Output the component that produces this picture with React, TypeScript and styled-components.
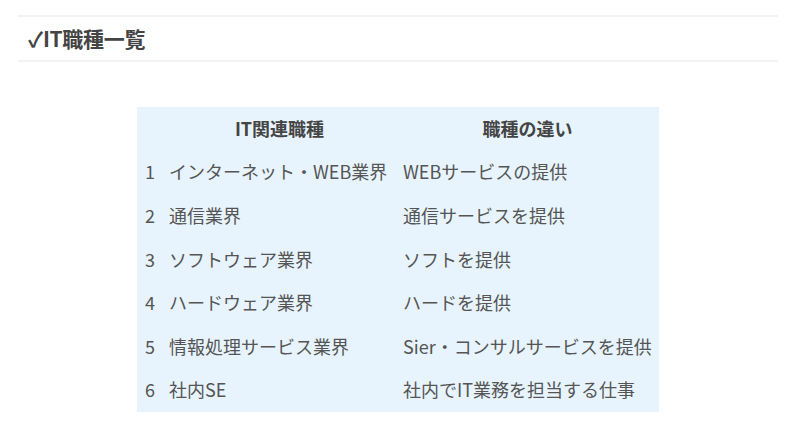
import styled, {createGlobalStyle} from "styled-components"

const GlobalStyle = createGlobalStyle`
  body {
    margin: 0;
    background: #ffffff;
    font-family: "Noto Sans CJK JP", "Noto Sans", sans-serif;
  }
`

const rows = [
    {no: 1, name: "インターネット・WEB業界", diff: "WEBサービスの提供"},
    {no: 2, name: "通信業界", diff: "通信サービスを提供"},
    {no: 3, name: "ソフトウェア業界", diff: "ソフトを提供"},
    {no: 4, name: "ハードウェア業界", diff: "ハードを提供"},
    {no: 5, name: "情報処理サービス業界", diff: "Sier・コンサルサービスを提供"},
    {no: 6, name: "社内SE", diff: "社内でIT業務を担当する仕事"},
]

const Page = styled.main`
  padding: 15px 20px 0 18px;
`

const Heading = styled.h2`
  margin: 0;
  height: 41px;
  display: flex;
  align-items: center;
  padding: 0 0 2px 10px;
  box-sizing: content-box;
  border-top: 2px solid #f3f3f3;
  border-bottom: 2px solid #f3f3f3;
  color: #444444;
  font-size: 21px;
  font-weight: 700;
  letter-spacing: -0.3px;
`

const Table = styled.table`
  margin: 45px auto 0;
  border-collapse: collapse;
  background: #e7f4fd;
  color: #555555;
  font-size: 18px;
`

const Cell = styled.td<{$width: number, $head?: boolean, $center?: boolean, $pad?: number}>`
  width: ${props => props.$width}px;
  height: 43.6px;
  padding: 0 0 2px ${props => props.$pad ?? 7}px;
  box-sizing: border-box;
  text-align: ${props => props.$center ? "center" : "left"};
  font-weight: ${props => props.$head ? 700 : 400};
  color: ${props => props.$head ? "#444444" : "#555555"};
  white-space: nowrap;
  vertical-align: middle;
`

function App() {
    return (
        <Page>
            <GlobalStyle/>
            <Heading>✓IT職種一覧</Heading>
            <Table>
                <tbody>
                <tr>
                    <Cell $width={26} $head $pad={0}/>
                    <Cell $width={233} $head $center $pad={0}>IT関連職種</Cell>
                    <Cell $width={263} $head $center $pad={0}>職種の違い</Cell>
                </tr>
                {rows.map(row => (
                    <tr key={row.no}>
                        <Cell $width={26} $pad={8}>{row.no}</Cell>
                        <Cell $width={233} $pad={6}>{row.name}</Cell>
                        <Cell $width={263}>{row.diff}</Cell>
                    </tr>
                ))}
                </tbody>
            </Table>
        </Page>
    )
}

export default App
